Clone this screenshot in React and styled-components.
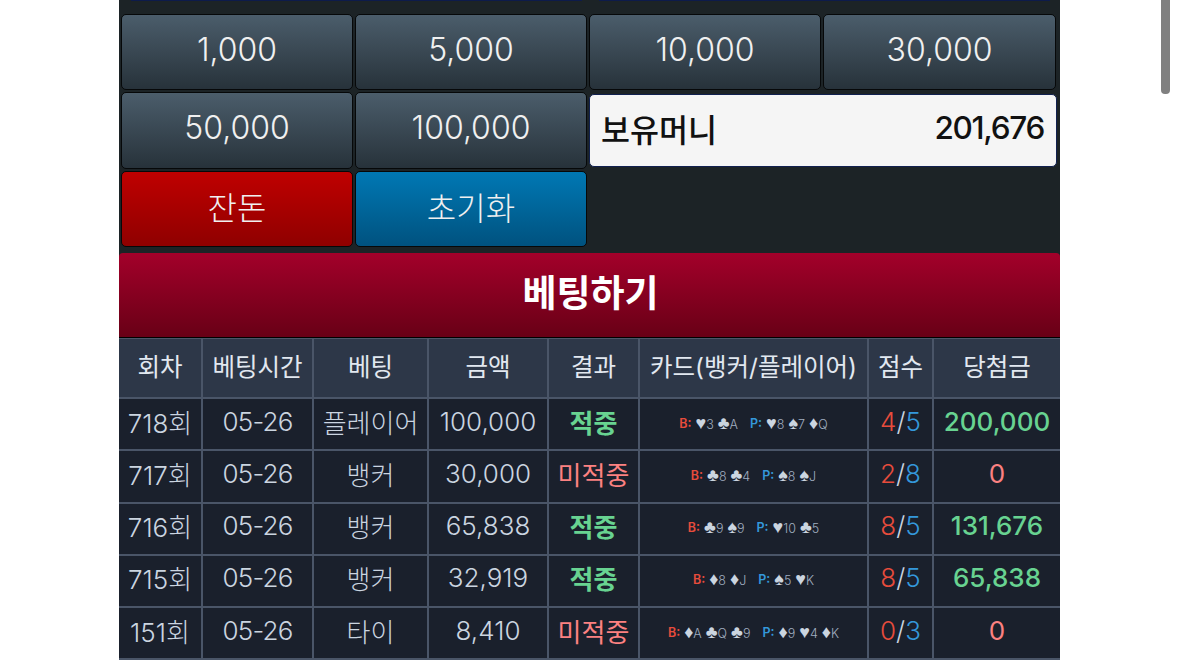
import React from 'react'
import styled, { createGlobalStyle } from 'styled-components'

const FONT = 'Inter, "Noto Sans CJK KR", "Noto Sans", sans-serif'

const chips = ['1,000', '5,000', '10,000', '30,000', '50,000', '100,000']

const rows = [
  { round: '718회', bet: '플레이어', amount: '100,000', win: true, banker: ['♥3', '♣A'], player: ['♥8', '♠7', '♦Q'], b: 4, p: 5, prize: '200,000' },
  { round: '717회', bet: '뱅커', amount: '30,000', win: false, banker: ['♣8', '♣4'], player: ['♠8', '♠J'], b: 2, p: 8, prize: '0' },
  { round: '716회', bet: '뱅커', amount: '65,838', win: true, banker: ['♣9', '♠9'], player: ['♥10', '♣5'], b: 8, p: 5, prize: '131,676' },
  { round: '715회', bet: '뱅커', amount: '32,919', win: true, banker: ['♦8', '♦J'], player: ['♠5', '♥K'], b: 8, p: 5, prize: '65,838' },
  { round: '151회', bet: '타이', amount: '8,410', win: false, banker: ['♦A', '♣Q', '♣9'], player: ['♦9', '♥4', '♦K'], b: 0, p: 3, prize: '0' },
]

const columns = [
  { label: '회차', width: 84 },
  { label: '베팅시간', width: 111 },
  { label: '베팅', width: 115 },
  { label: '금액', width: 120 },
  { label: '결과', width: 91 },
  { label: '카드(뱅커/플레이어)', width: 229 },
  { label: '점수', width: 65 },
  { label: '당첨금', width: 126 },
]

const Card = ({ value }) => (
  <CardText>
    <Suit>{value[0]}</Suit>
    {value.slice(1)}
  </CardText>
)

const App = () => (
  <>
    <GlobalStyle />
    <Page>
      <Panel>
        <TopEdge>
          <TopSegment />
          <TopSegment />
        </TopEdge>
        <ChipGrid>
          {chips.map((chip) => (
            <ChipButton key={chip}>{chip}</ChipButton>
          ))}
          <Balance>
            <span>보유머니</span>
            <BalanceAmount>201,676</BalanceAmount>
          </Balance>
          <ChipButton $tone="red">잔돈</ChipButton>
          <ChipButton $tone="blue">초기화</ChipButton>
        </ChipGrid>
        <BetButton>베팅하기</BetButton>
        <HistoryTable>
          <colgroup>
            {columns.map((col) => (
              <col key={col.label} width={col.width} />
            ))}
          </colgroup>
          <thead>
            <tr>
              {columns.map((col) => (
                <HeadCell key={col.label}>{col.label}</HeadCell>
              ))}
            </tr>
          </thead>
          <tbody>
            {rows.map((row) => (
              <tr key={row.round}>
                <Cell>{row.round}</Cell>
                <DateCell>05-26</DateCell>
                <Cell>{row.bet}</Cell>
                <Cell>{row.amount}</Cell>
                <Cell>
                  <Result $win={row.win}>{row.win ? '적중' : '미적중'}</Result>
                </Cell>
                <Cell>
                  <Cards>
                    <Side $color="#e74c3c">B:</Side>
                    {row.banker.map((c) => (
                      <Card key={c} value={c} />
                    ))}
                    <Gap />
                    <Side $color="#3498db">P:</Side>
                    {row.player.map((c) => (
                      <Card key={c} value={c} />
                    ))}
                  </Cards>
                </Cell>
                <Cell>
                  <Score $color="#e74c3c">{row.b}</Score>/<Score $color="#3498db">{row.p}</Score>
                </Cell>
                <Cell>
                  <Prize $win={row.win}>{row.prize}</Prize>
                </Cell>
              </tr>
            ))}
          </tbody>
        </HistoryTable>
      </Panel>
      <ScrollThumb />
    </Page>
  </>
)

const GlobalStyle = createGlobalStyle`
  html, body {
    margin: 0;
    height: 660px;
    overflow: hidden;
    background: #fff;
  }
`

const Page = styled.div`
  position: relative;
  height: 660px;
  overflow: hidden;
  font-family: ${FONT};
  display: flex;
  justify-content: flex-start;
  padding-left: 119px;
`

const Panel = styled.div`
  width: 941px;
  flex: none;
  background: #1c2326;
`

const TopEdge = styled.div`
  display: flex;
  gap: 17px;
  padding: 0 10px 0 12px;
  height: 14px;
`

const TopSegment = styled.div`
  flex: 1;
  height: 1px;
  background: #0d1b4a;
`

const ChipGrid = styled.div`
  display: grid;
  grid-template-columns: 232px 232px 232px 233px;
  grid-auto-rows: 76.4px;
  column-gap: 2px;
  row-gap: 2px;
  padding-left: 2px;
  height: 239px;
`

const toneGradients = {
  red: 'linear-gradient(#bf0000, #8f0000)',
  blue: 'linear-gradient(#0078b4, #00527f)',
  slate: 'linear-gradient(#4b5d6b, #27323a)',
}

const ChipButton = styled.button`
  border: 1px solid #060809;
  border-radius: 5px;
  background: ${(props) => toneGradients[props.$tone || 'slate']};
  color: #f0f0f0;
  font-family: ${FONT};
  font-weight: 300;
  font-size: 32px;
  padding: 0 0 6px;
`

const Balance = styled.div`
  grid-column: span 2;
  margin: 2px -1px 2px 0;
  box-sizing: border-box;
  background: #f5f5f5;
  border: 1px solid #10204f;
  border-radius: 5px;
  display: flex;
  justify-content: space-between;
  align-items: center;
  padding: 0 12px 6px 11px;
  color: #111;
  font-size: 31.5px;
  font-weight: 500;
`

const BalanceAmount = styled.span`
  letter-spacing: -1.3px;
`

const BetButton = styled.button`
  display: block;
  width: 100%;
  height: 85px;
  border: 0;
  border-bottom: 1px solid #000;
  border-radius: 4px 4px 0 0;
  background: linear-gradient(#a3002a, #680016);
  color: #fff;
  font-family: ${FONT};
  font-size: 37px;
  font-weight: 700;
  padding: 0 0 9px 2px;
`

const HistoryTable = styled.table`
  width: 941px;
  table-layout: fixed;
  border-collapse: separate;
  border-spacing: 0;
`

const HeadCell = styled.th`
  box-sizing: border-box;
  height: 61px;
  padding: 0 0 6px;
  background: #2d3748;
  border-top: 1px solid #4a5568;
  border-right: 2px solid #4a5568;
  border-bottom: 2px solid #4a5568;
  color: #e2e8f0;
  font-size: 24.5px;
  font-weight: 400;

  &:last-child {
    border-right: 0;
  }
`

const Cell = styled.td`
  box-sizing: border-box;
  height: 52.25px;
  padding: 0 0 6px;
  background: #1a202c;
  border-right: 2px solid #4a5568;
  border-bottom: 2px solid #4a5568;
  color: #cbd5e0;
  font-size: 26px;
  font-weight: 300;
  text-align: center;
  white-space: nowrap;

  &:last-child {
    border-right: 0;
  }
`

const DateCell = styled(Cell)`
  letter-spacing: -0.8px;
`

const Result = styled.span`
  color: ${(props) => (props.$win ? '#68d391' : '#fc8181')};
  font-weight: ${(props) => (props.$win ? 700 : 400)};
`

const Cards = styled.div`
  display: flex;
  justify-content: center;
  align-items: center;
  gap: 4px;
  font-size: 12.5px;
  line-height: 16px;
  color: #a0aec0;
  padding-top: 5px;
`

const Side = styled.span`
  color: ${(props) => props.$color};
  font-weight: 600;
`

const Gap = styled.span`
  width: 4px;
`

const CardText = styled.span`
  font-weight: 300;
`

const Suit = styled.span`
  color: #cbd5e0;
  font-family: 'DejaVu Sans', sans-serif;
  font-size: 18px;
  line-height: 16px;
`

const Score = styled.span`
  color: ${(props) => props.$color};
`

const Prize = styled.span`
  color: ${(props) => (props.$win ? '#68d391' : '#fc8181')};
  font-weight: ${(props) => (props.$win ? 500 : 400)};
`

const ScrollThumb = styled.div`
  position: absolute;
  left: 1161px;
  top: 0;
  width: 9px;
  height: 94px;
  background: #808080;
  border-radius: 0 0 4px 4px;
`

export default App
